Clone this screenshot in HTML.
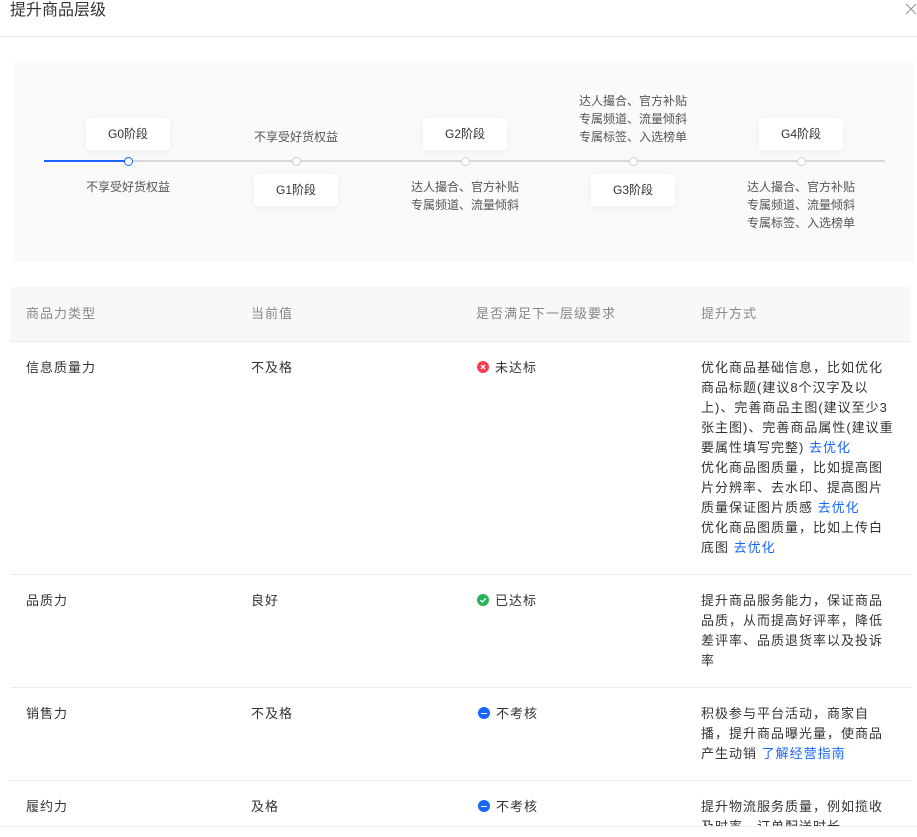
<!DOCTYPE html>
<html><head><meta charset="utf-8"><style>
*{margin:0;padding:0;box-sizing:border-box}
body{width:917px;height:835px;overflow:hidden;background:#fff;font-family:"Liberation Sans","Noto Sans CJK SC",sans-serif;color:#333;position:relative}
.abs{position:absolute}
.title{left:10px;top:0;font-size:16px;line-height:22px;color:#333}
.hl{left:0;top:36px;width:917px;height:1px;background:#ebebeb}
.panel{left:13px;top:61px;width:901px;height:201px;background:#fafafa}
.line{top:160px;height:2px;background:#d9d9d9;left:44px;width:841px}
.dot{width:9px;height:9px;border-radius:50%;background:#fff;border:1px solid #d0d0d0;top:156.5px}
.box{width:84px;height:32px;background:#fff;border-radius:3px;box-shadow:0 2px 8px rgba(0,0,0,.06);font-size:12px;line-height:32px;text-align:center;color:#333}
.t{font-size:12px;line-height:18px;color:#555;text-align:center;width:140px}
.th{top:287px;left:10px;width:901px;height:54px;background:#f7f8fa}
.c{font-size:13px;line-height:20px;letter-spacing:1px;white-space:nowrap}
.h{color:#888;top:304px}
.rl{left:10px;width:901px;height:1px;background:#ececec}
a{color:#1966ff;text-decoration:none}
.ic{display:inline-block;width:12px;height:12px;border-radius:50%;vertical-align:-1px;margin-right:6px;position:relative}
</style></head><body>
<div class="abs title">提升商品层级</div>
<svg class="abs" style="left:905px;top:3px" width="12" height="12"><path d="M1 1L11 11M11 1L1 11" stroke="#999" stroke-width="1.2"/></svg>
<div class="abs hl"></div>
<div class="abs panel"></div>
<div class="abs line"></div>
<div class="abs" style="top:160px;left:44px;width:84px;height:2px;background:#1966ff"></div>
<div class="abs dot" style="left:123.5px;border-color:#1966ff;border-width:1.5px"></div>
<div class="abs dot" style="left:291.5px"></div>
<div class="abs dot" style="left:460.5px"></div>
<div class="abs dot" style="left:628.5px"></div>
<div class="abs dot" style="left:796.5px"></div>
<div class="abs box" style="left:86px;top:118px">G0阶段</div>
<div class="abs box" style="left:254px;top:174px">G1阶段</div>
<div class="abs box" style="left:423px;top:118px">G2阶段</div>
<div class="abs box" style="left:591px;top:174px">G3阶段</div>
<div class="abs box" style="left:759px;top:118px">G4阶段</div>
<div class="abs t" style="left:58px;top:178px">不享受好货权益</div>
<div class="abs t" style="left:226px;top:128px">不享受好货权益</div>
<div class="abs t" style="left:395px;top:178px">达人撮合、官方补贴<br>专属频道、流量倾斜</div>
<div class="abs t" style="left:563px;top:92px">达人撮合、官方补贴<br>专属频道、流量倾斜<br>专属标签、入选榜单</div>
<div class="abs t" style="left:731px;top:178px">达人撮合、官方补贴<br>专属频道、流量倾斜<br>专属标签、入选榜单</div>

<div class="abs th"></div>
<div class="abs c h" style="left:26px">商品力类型</div>
<div class="abs c h" style="left:251px">当前值</div>
<div class="abs c h" style="left:476px">是否满足下一层级要求</div>
<div class="abs c h" style="left:701px">提升方式</div>
<div class="abs rl" style="top:341px"></div>

<div class="abs c" style="left:26px;top:358px">信息质量力</div>
<div class="abs c" style="left:251px;top:358px">不及格</div>
<div class="abs c" style="left:477px;top:358px"><span class="ic" style="background:#f5404f"><svg class="abs" style="left:0;top:0" width="12" height="12"><path d="M4 4L8 8M8 4L4 8" stroke="#fff" stroke-width="1.3"/></svg></span>未达标</div>
<div class="abs c" style="left:701px;top:358px">优化商品基础信息，比如优化<br>商品标题(建议8个汉字及以<br>上)、完善商品主图(建议至少3<br>张主图)、完善商品属性(建议重<br>要属性填写完整) <a>去优化</a><br>优化商品图质量，比如提高图<br>片分辨率、去水印、提高图片<br>质量保证图片质感 <a>去优化</a><br>优化商品图质量，比如上传白<br>底图 <a>去优化</a></div>
<div class="abs rl" style="top:574px"></div>

<div class="abs c" style="left:26px;top:591px">品质力</div>
<div class="abs c" style="left:251px;top:591px">良好</div>
<div class="abs c" style="left:477px;top:591px"><span class="ic" style="background:#26b35a"><svg class="abs" style="left:0;top:0" width="12" height="12"><path d="M3.3 6.2L5.3 8L8.8 4.3" stroke="#fff" stroke-width="1.3" fill="none"/></svg></span>已达标</div>
<div class="abs c" style="left:701px;top:591px">提升商品服务能力，保证商品<br>品质，从而提高好评率，降低<br>差评率、品质退货率以及投诉<br>率</div>
<div class="abs rl" style="top:687px"></div>

<div class="abs c" style="left:26px;top:704px">销售力</div>
<div class="abs c" style="left:251px;top:704px">不及格</div>
<div class="abs c" style="left:478px;top:704px"><span class="ic" style="background:#1966ff"><span class="abs" style="left:3px;top:5.5px;width:6px;height:1.3px;background:#fff"></span></span>不考核</div>
<div class="abs c" style="left:701px;top:704px">积极参与平台活动，商家自<br>播，提升商品曝光量，使商品<br>产生动销 <a>了解经营指南</a></div>
<div class="abs rl" style="top:780px"></div>

<div class="abs c" style="left:26px;top:797px">履约力</div>
<div class="abs c" style="left:251px;top:797px">及格</div>
<div class="abs c" style="left:478px;top:797px"><span class="ic" style="background:#1966ff"><span class="abs" style="left:3px;top:5.5px;width:6px;height:1.3px;background:#fff"></span></span>不考核</div>
<div class="abs c" style="left:701px;top:797px">提升物流服务质量，例如揽收<br>及时率、订单配送时长</div>
<div class="abs" style="left:0;top:826px;width:917px;height:9px;background:#fff;border-top:1px solid #ececec"></div>
</body></html>
